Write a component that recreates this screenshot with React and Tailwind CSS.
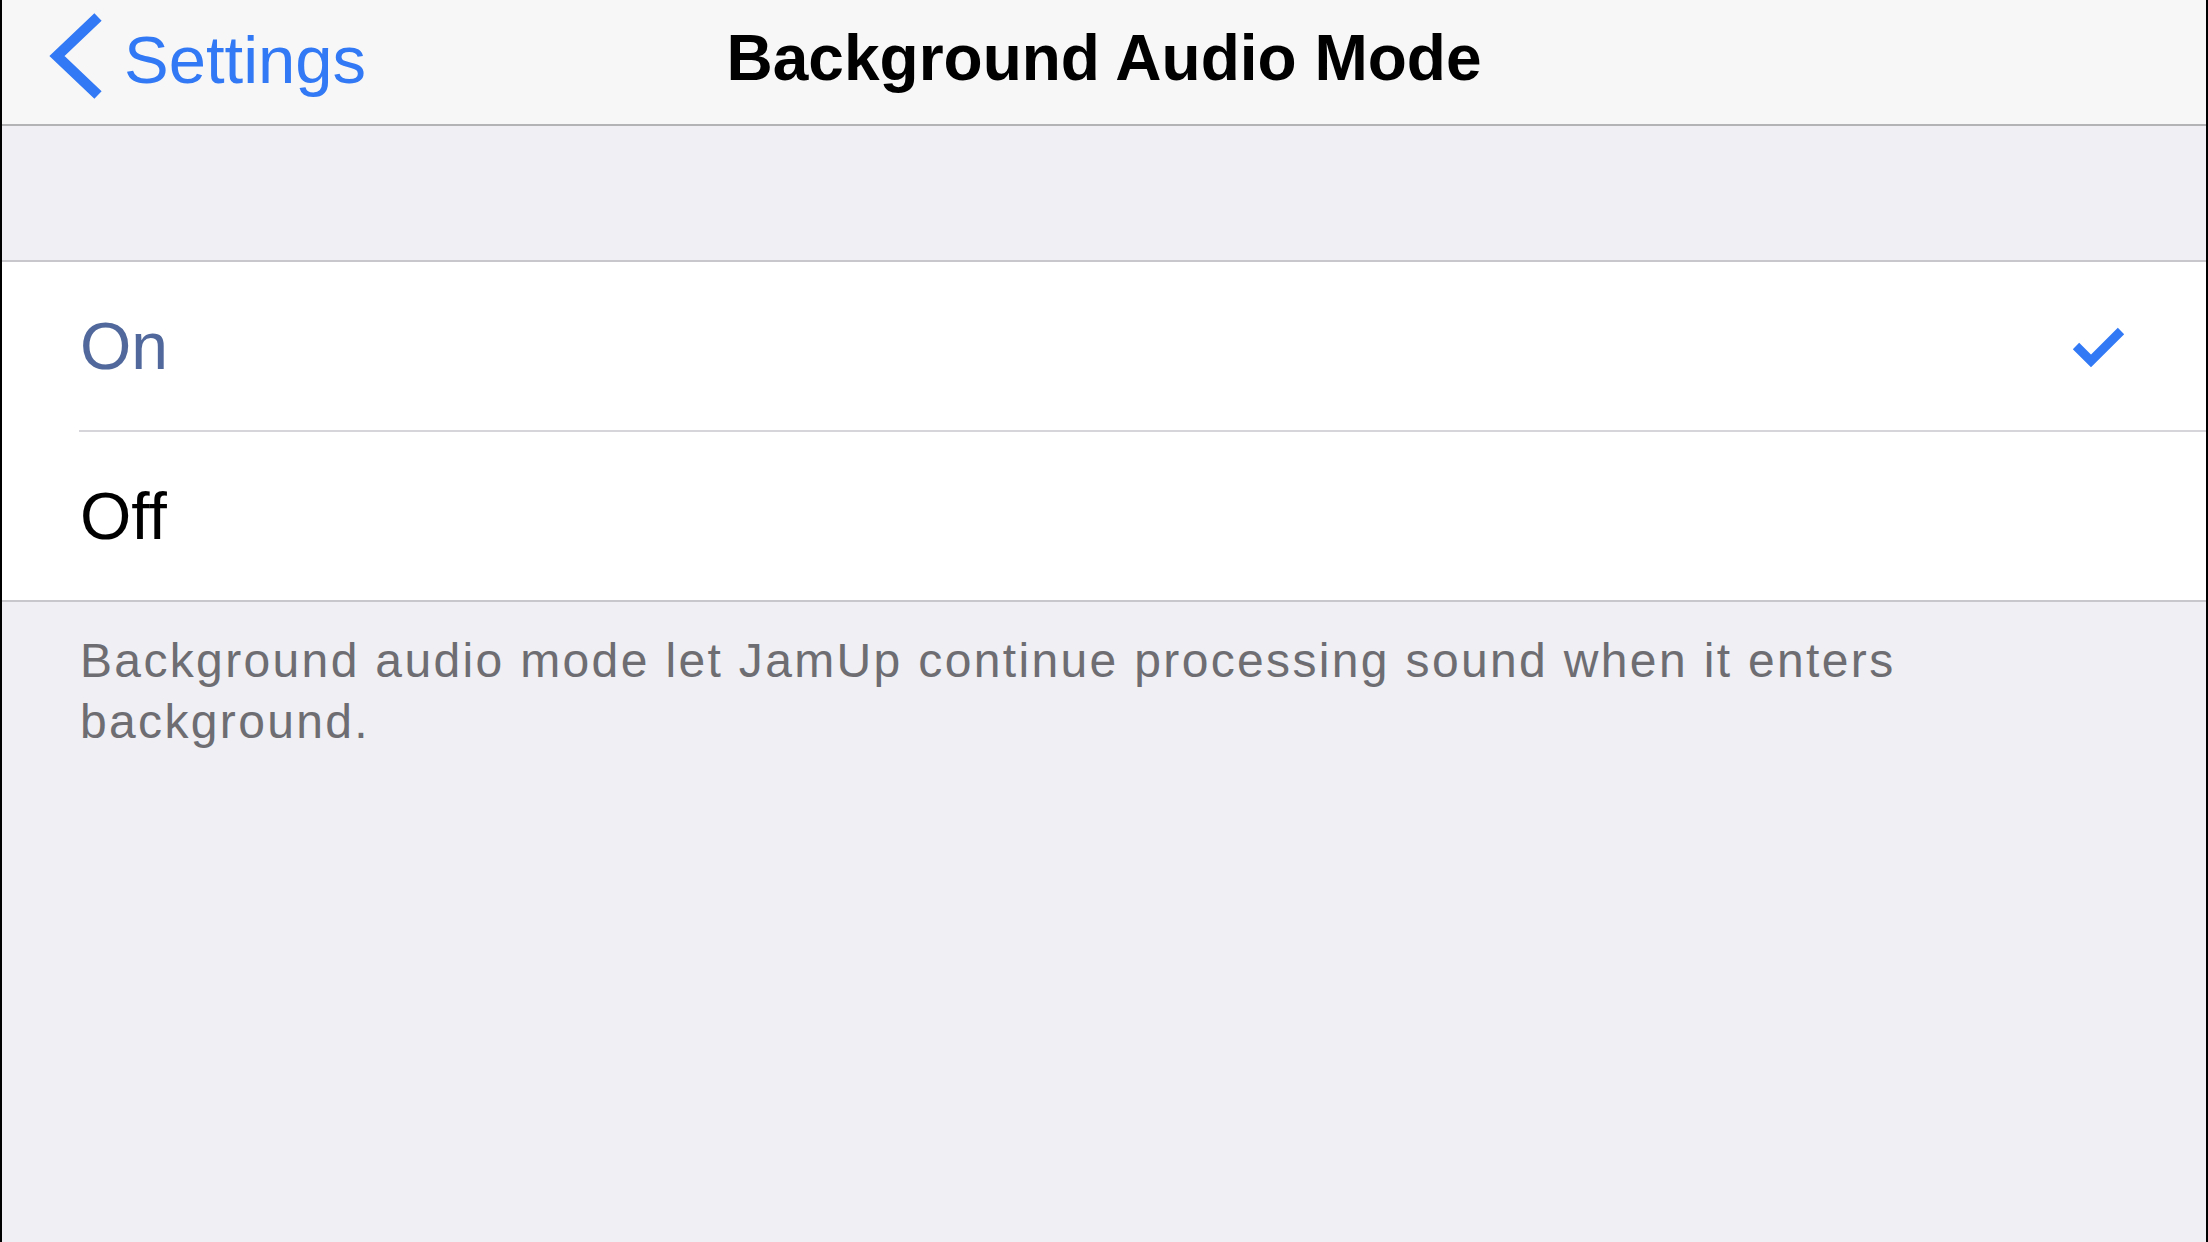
import React from "react";

export default function App() {
  return (
    <div className="w-[2208px] h-[1242px] bg-black px-[2px] flex font-['Liberation_Sans',sans-serif]">
      <div className="flex-1 flex flex-col bg-[#efeff4]">
        {/* Navigation bar */}
        <div className="h-[126px] shrink-0 bg-[#f7f7f8] border-b-2 border-[#b3b3b6] grid grid-cols-[1fr_auto_1fr] items-start">
          <div className="flex items-start">
            <svg
              className="ml-[38px] shrink-0"
              width="70"
              height="110"
              viewBox="40 0 70 110"
            >
              <polyline
                points="98,17 57,56 98,95"
                fill="none"
                stroke="#3179f5"
                strokeWidth="10.5"
                strokeLinecap="butt"
                strokeLinejoin="miter"
              />
            </svg>
            <span className="mt-[26px] ml-[14px] text-[67px] leading-none text-[#3179f5]">
              Settings
            </span>
          </div>
          <div className="mt-[26px] text-[64px] leading-none font-bold text-black whitespace-nowrap">
            Background Audio Mode
          </div>
          <div />
        </div>

        {/* Spacer band */}
        <div className="h-[134px] shrink-0" />

        {/* Group */}
        <div className="bg-white border-y-2 border-[#c8c7cc] flex flex-col">
          <div className="h-[168px] flex items-center justify-between pl-[78px] pr-[80px]">
            <span className="text-[66px] leading-none text-[#50689c]">On</span>
            <svg width="56" height="44" viewBox="2070 323 56 44">
              <polyline
                points="2076,345 2091,360 2121,330"
                fill="none"
                stroke="#3179f5"
                strokeWidth="9"
                strokeLinecap="butt"
                strokeLinejoin="miter"
              />
            </svg>
          </div>
          <div className="ml-[77px] h-[2px] bg-[#d6d5d9]" />
          <div className="h-[168px] flex items-center pl-[78px]">
            <span className="text-[66px] leading-none text-black">Off</span>
          </div>
        </div>

        {/* Footer */}
        <p className="pt-[28px] pl-[78px] pr-[80px] text-[48px] leading-[61px] tracking-[2.35px] text-[#6d6d72]">
          Background audio mode let JamUp continue processing sound when it enters background.
        </p>
      </div>
    </div>
  );
}
